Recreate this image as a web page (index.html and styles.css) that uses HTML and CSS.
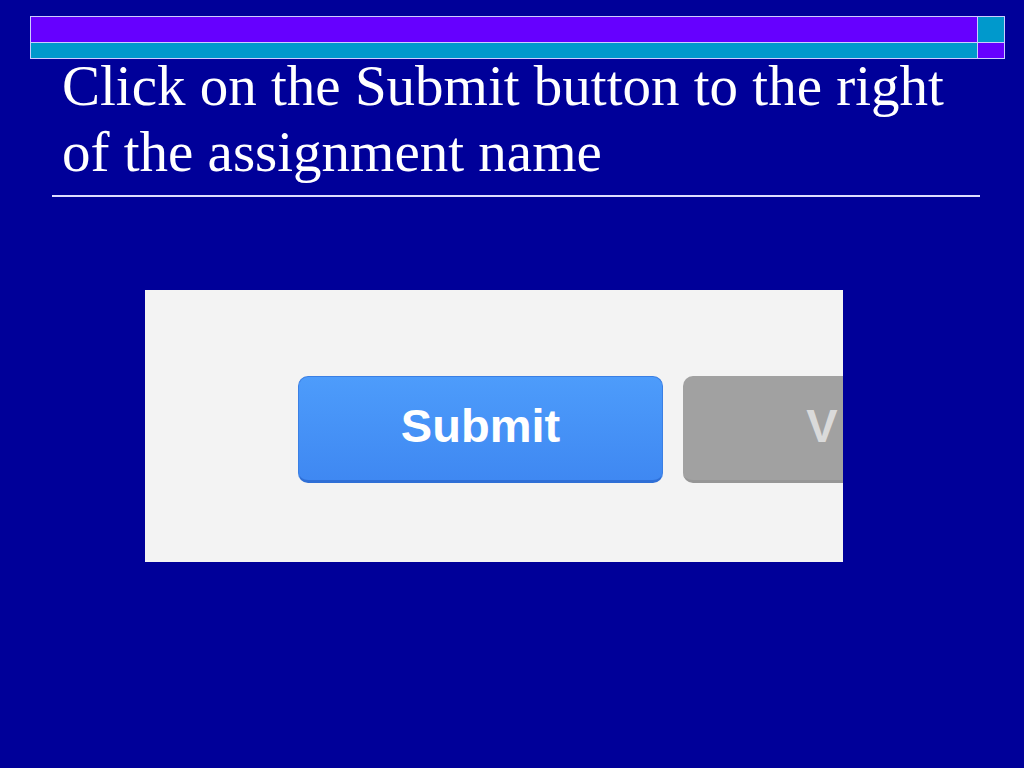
FILE: index.html
```html
<!DOCTYPE html>
<html lang="en">
<head>
    <meta charset="UTF-8">
    <meta name="viewport" content="width=device-width, initial-scale=1.0">
    <title>Submit an Assignment</title>
    <link rel="stylesheet" href="styles.css">
</head>
<body>
    <!-- Header bars -->
    <div class="bars">
        <div class="bar purple"></div>
        <div class="bar cyan"></div>
        <div class="bar cyan"></div>
        <div class="bar purple"></div>
    </div>

    <h1 class="title">Click on the Submit button to the right of the assignment name</h1>
    <div class="rule"></div>

    <!-- Screenshot of the buttons -->
    <div class="shot">
        <div class="btn btn-submit">Submit</div>
        <div class="btn btn-view">View</div>
    </div>
</body>
</html>
```

FILE: styles.css
```css
body {
    margin: 0;
    padding: 0;
    background-color: #000099;
    font-family: "Liberation Serif", "Times New Roman", serif;
    width: 1024px;
    height: 768px;
    overflow: hidden;
}
.bars {
    display: grid;
    grid-template-columns: 1fr 26px;
    grid-template-rows: 25px 15px;
    gap: 1px;
    padding: 1px;
    margin: 16px 19px 0 30px;
    background-color: #ccccff;
}
.purple {
    background-color: #6600ff;
}
.cyan {
    background-color: #0099cc;
}
.title {
    margin: -6px 40px 0 62px;
    font-size: 57px;
    font-weight: normal;
    line-height: 66px;
    color: #ffffff;
}
.rule {
    margin: 10px 44px 0 52px;
    height: 2px;
    background-color: #dcdcff;
}
.shot {
    display: flex;
    gap: 20px;
    margin: 93px 0 0 145px;
    width: 545px;
    height: 186px;
    padding: 86px 0 0 153px;
    background-color: #f3f3f3;
    overflow: hidden;
}
.btn {
    flex: none;
    height: 107px;
    box-sizing: border-box;
    border-radius: 10px;
    font-family: "Liberation Sans", Arial, sans-serif;
    font-size: 47px;
    font-weight: bold;
    line-height: 98px;
    text-align: center;
}
.btn-submit {
    width: 365px;
    background: linear-gradient(#4d9cfb, #3f88f2);
    border: 1px solid #3a7fe4;
    border-bottom: 3px solid #2f6fd6;
    color: #ffffff;
}
.btn-view {
    width: 369px;
    padding-top: 1px;
    letter-spacing: 4px;
    background-color: #a1a1a1;
    border-bottom: 3px solid #969696;
    color: #dadada;
}
```
